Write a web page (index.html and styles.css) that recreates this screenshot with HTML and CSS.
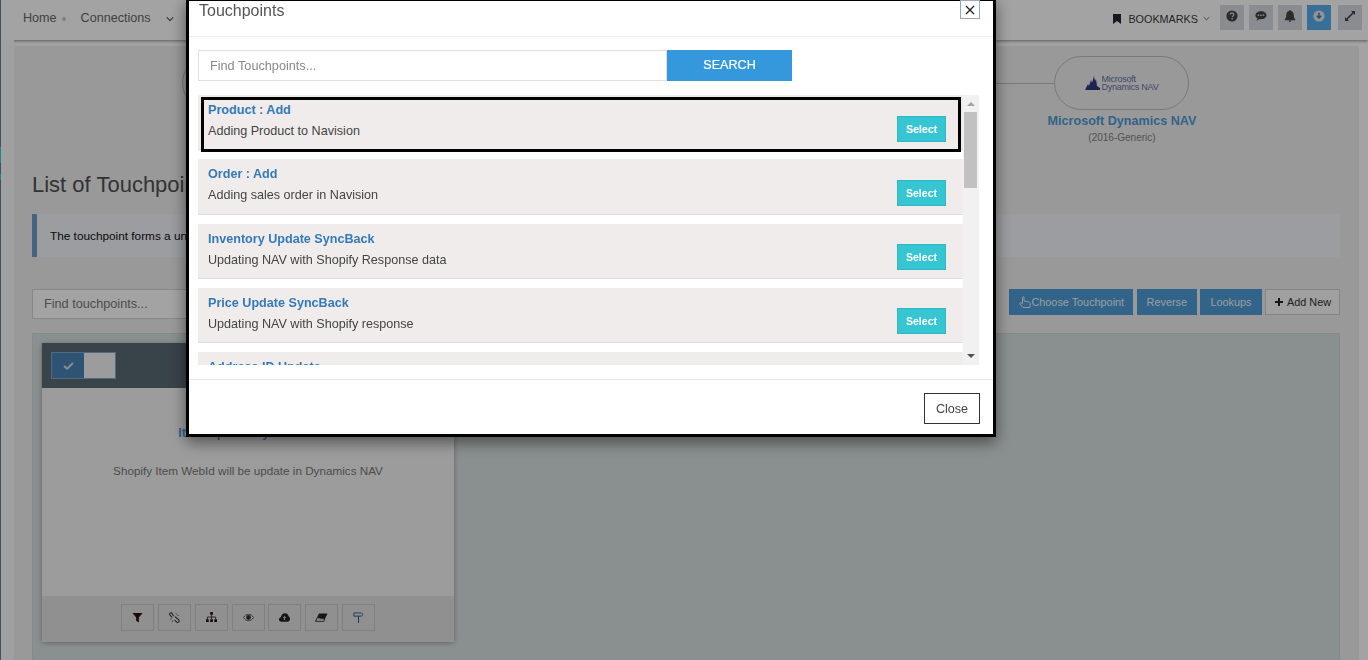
FILE: index.html
```html
<!DOCTYPE html>
<html lang="en">
<head>
<meta charset="utf-8">
<title>Touchpoints</title>
<link rel="stylesheet" href="styles.css">
</head>
<body>
<div class="page">
  <header class="topbar">
    <nav class="crumbs">
      <a class="crumb">Home</a><span class="dot"></span>
      <a class="crumb">Connections</a>
      <svg class="chev" viewBox="0 0 10 6"><path d="M1 1l4 4 4-4" fill="none" stroke="#444" stroke-width="1.3"/></svg>
    </nav>
    <div class="tools">
      <span class="bookmarks">
        <svg class="bm" viewBox="0 0 8 10"><path d="M0 0h8v10L4 7 0 10z" fill="#2a2430"/></svg>
        BOOKMARKS
        <svg class="chev2" viewBox="0 0 10 6"><path d="M1 1l4 4 4-4" fill="none" stroke="#555" stroke-width="1.2"/></svg>
      </span>
      <span class="tool"><svg viewBox="0 0 12 12"><circle cx="6" cy="6" r="5.6" fill="#444"/><path d="M4.2 4.6C4.3 3.6 5 3 6 3s1.9.6 1.9 1.6c0 1.3-1.7 1.3-1.7 2.6" fill="none" stroke="#c8c8c8" stroke-width="1.3"/><rect x="5.4" y="8" width="1.5" height="1.4" fill="#c8c8c8"/></svg></span>
      <span class="tool"><svg viewBox="0 0 14 12"><path d="M7 .5c3.7 0 6.5 2 6.5 4.6S10.7 9.7 7 9.7c-.6 0-1.1 0-1.7-.2C4.3 10.500 3 11.200 1.500 11.400c.8-.8 1.300-1.800 1.400-2.800C1.400 7.800.5 6.500.5 5.100.5 2.500 3.300.5 7 .5z" fill="#444"/><circle cx="4" cy="5.100" r="1" fill="#c8c8c8"/><circle cx="7" cy="5.100" r="1" fill="#c8c8c8"/><circle cx="10" cy="5.100" r="1" fill="#c8c8c8"/></svg></span>
      <span class="tool"><svg viewBox="0 0 12 13"><path d="M6 0c.6 0 1 .4 1 1 2 .4 3 2 3 4 0 3 .6 4 1.700 5.200V11H.3v-.8C1.400 9 2 8 2 5c0-2 1-3.600 3-4 0-.6.400-1 1-1z" fill="#444"/><path d="M4.500 11.500h3C7.500 12.400 6.800 13 6 13s-1.500-.6-1.500-1.500z" fill="#444"/></svg></span>
      <span class="tool tool-on"><svg viewBox="0 0 12 12"><circle cx="6" cy="6" r="5.600" fill="#e8e8e8"/><path d="M6 2.800v5M3.700 5.700L6 8l2.300-2.300" fill="none" stroke="#3c7aa8" stroke-width="1.500"/></svg></span>
      <span class="tool tool-last"><svg viewBox="0 0 12 12"><path d="M7 1h4v4L9.600 3.600 3.600 9.600 5 11H1V7l1.400 1.400 6-6z" fill="#444"/></svg></span>
    </div>
  </header>

  <div class="shell">
    <div class="rail"><i class="mark mark-a"></i><i class="mark mark-b"></i></div>
    <main class="main">
      <div class="flow">
        <div class="pill pill-src"></div>
        <div class="flowline"></div>
        <div class="pill">
          <svg class="navmark" viewBox="0 0 15 14"><path d="M0 14L3 8l1 2 2-6 1 3 2-7 1 5 1-2 1 7 3 2v2z" fill="#2b3a80"/></svg>
          <span class="navtext">Microsoft<br>Dynamics NAV</span>
        </div>
      </div>
      <div class="nodeinfo">
        <div class="nodename">Microsoft Dynamics NAV</div>
        <div class="nodesub">(2016-Generic)</div>
      </div>
      <h1 class="pagetitle">List of Touchpoints</h1>
      <div class="note">The touchpoint forms a unique</div>
      <div class="actions">
        <div class="findbox">Find touchpoints...</div>
        <div class="btns">
          <span class="btn btn-blue btn-choose">
            <svg class="hand" viewBox="0 0 12 13"><path d="M3.500 1.500c0-1 1.500-1 1.500 0V5l5 1c1 .2 1.500 1 1.300 2l-.5 3.500H4L1 8c-.6-.8.400-1.800 1.200-1.200l1.300 1z" fill="none" stroke="#e6eef4" stroke-width="1"/></svg>Choose Touchpoint</span>
          <span class="btn btn-blue">Reverse</span>
          <span class="btn btn-blue btn-lookups">Lookups</span>
          <span class="btn btn-line"><svg class="plus" viewBox="0 0 8 8"><path d="M4 0v8M0 4h8" stroke="#222" stroke-width="2"/></svg> Add New</span>
        </div>
      </div>
      <section class="panel">
        <article class="card">
          <div class="cardhead">
            <div class="toggle">
              <span class="toggle-on"><svg viewBox="0 0 12 9"><path d="M1 4.500l3.500 3L11 1" fill="none" stroke="#d4d8dc" stroke-width="2.400"/></svg></span>
              <span class="toggle-off"></span>
            </div>
          </div>
          <div class="cardbody">
            <h3 class="cardtitle">Item Update Sync Back</h3>
            <p class="carddesc">Shopify Item WebId will be update in Dynamics NAV</p>
          </div>
          <div class="cardfoot">
            <span class="ib"><svg viewBox="0 0 12 12"><path d="M.5 1h11L7.500 6v5.500l-3-2V6z" fill="#2a1010"/></svg></span>
            <span class="ib"><svg viewBox="0 0 12 12"><path d="M5 4.500L3.500 1.800C3 .8 1.800.7 1.200 1.300S.6 2.800 1.300 3.600L3.500 6M6.500 5l3.900 3.400c.9.900.8 1.900.2 2.500s-1.700.6-2.400-.1L6 8.800" fill="none" stroke="#2c2c2c" stroke-width="1.100"/><path d="M7.500 1l.7 2M11 3.500L9 4M1 8l2-.5M3.500 11L4 9" stroke="#8a6a5a" stroke-width=".9" fill="none"/></svg></span>
            <span class="ib"><svg viewBox="0 0 12 12"><path d="M4.500 0h3v3h-3zM0 8h3v3H0zM4.500 8h3v3h-3zM9 8h3v3H9z" fill="#2a1010"/><path d="M6 3v5M1.500 8V5.500h9V8" fill="none" stroke="#333"/></svg></span>
            <span class="ib"><svg viewBox="0 0 12 8"><path d="M.5 4C2 1.500 4 .5 6 .5s4 1 5.500 3.500C10 6.500 8 7.500 6 7.500S2 6.500.5 4z" fill="none" stroke="#555"/><circle cx="6" cy="4" r="2.600" fill="#333"/></svg></span>
            <span class="ib"><svg viewBox="0 0 13 10"><path d="M3 10C1 10 0 8.800 0 7.300 0 6 1 5 2.200 4.800 2.500 2 4.500 0 7 0c2.300 0 4 1.500 4.300 3.500C12.300 4 13 5.200 13 6.700 13 8.600 11.600 10 10 10z" fill="#222"/><path d="M6.500 3L4.300 5.500h1.400V8h1.600V5.500h1.400z" fill="#bbb"/></svg></span>
            <span class="ib ib-wide"><svg viewBox="0 0 13 9"><path d="M4 .5h8.500L9 8H.5z" fill="#222"/><path d="M2.300 4.500L.5 8.500H8.800l1-2.500z" fill="#c8c8c8" stroke="#222" stroke-width=".7"/></svg></span>
            <span class="ib"><svg viewBox="0 0 11 12"><path d="M5.500 4v8" stroke="#2c5a88" stroke-width="1.100"/><path d="M.5 1h8l2 1.800L8.500 4.500H.5z" fill="none" stroke="#2c5a88"/></svg></span>
          </div>
        </article>
      </section>
    </main>
    <div class="gutter"></div>
  </div>
</div>

<div class="overlay">
  <div class="modal">
    <div class="mhead">
      <h4 class="mtitle">Touchpoints</h4>
      <button class="mclose"><svg viewBox="0 0 10 10"><path d="M1 1l8 8M9 1l-8 8" stroke="#222" stroke-width="1.300"/></svg></button>
    </div>
    <div class="mbody">
      <div class="searchrow">
        <div class="search">Find Touchpoints...</div>
        <button class="searchbtn">SEARCH</button>
      </div>
      <div class="listwrap">
        <div class="list">
          <div class="item item-focus">
            <div class="itemtext"><a class="itemtitle">Product : Add</a><p class="itemdesc">Adding Product to Navision</p></div>
            <button class="select">Select</button>
          </div>
          <div class="item">
            <div class="itemtext"><a class="itemtitle">Order : Add</a><p class="itemdesc">Adding sales order in Navision</p></div>
            <button class="select">Select</button>
          </div>
          <div class="item">
            <div class="itemtext"><a class="itemtitle">Inventory Update SyncBack</a><p class="itemdesc">Updating NAV with Shopify Response data</p></div>
            <button class="select">Select</button>
          </div>
          <div class="item">
            <div class="itemtext"><a class="itemtitle">Price Update SyncBack</a><p class="itemdesc">Updating NAV with Shopify response</p></div>
            <button class="select">Select</button>
          </div>
          <div class="item">
            <div class="itemtext"><a class="itemtitle">Address ID Update</a></div>
          </div>
        </div>
        <div class="sbar">
          <i class="arrow arrow-up"></i>
          <i class="thumb"></i>
          <i class="arrow arrow-down"></i>
        </div>
      </div>
    </div>
    <div class="mfoot"><button class="closebtn">Close</button></div>
  </div>
</div>
</body>
</html>
```
FILE: styles.css
```css
* { box-sizing: border-box; }
html, body { margin: 0; height: 660px; overflow: hidden; }
body { font-family: "Liberation Sans", Arial, sans-serif; font-size: 12px; color: #444; background: #fff; }
h1, h3, h4, p { margin: 0; font-weight: normal; }
button { font-family: inherit; cursor: pointer; }

.page { height: 660px; display: flex; flex-direction: column; overflow: hidden; }

.topbar { height: 40px; flex: none; display: flex; align-items: center; justify-content: space-between; background: #fff; border-left: 1px solid #6c7d8e; box-shadow: 0 1px 3px rgba(0,0,0,.45); position: relative; padding: 0 6px 5px 22px; }
.crumbs { display: flex; align-items: center; color: #666; }
.crumb { font-size: 12.6px; }
.dot { width: 4px; height: 4px; border-radius: 50%; background: #c8c8c8; margin: 2px 15px 0 5px; }
.chev { width: 8px; height: 6px; margin: 2px 0 0 15px; }
.tools { display: flex; align-items: center; gap: 5px; }
.bookmarks { display: flex; align-items: center; font-size: 10.8px; color: #3a3a3a; margin: 2px 5px 0 0; }
.bm { width: 8px; height: 10px; margin-right: 7px; }
.chev2 { width: 7px; height: 5px; margin-left: 5px; }
.tool { width: 24px; height: 25px; background: #d6dce2; display: flex; align-items: center; justify-content: center; }
.tool svg { width: 12px; height: 12px; margin-bottom: 4px; }
.tool-on { background: #58aef0; }
.tool-last { margin-left: 2px; }

.shell { flex: 1; display: flex; padding-top: 6px; min-height: 0; background: #fff; }
.rail { width: 14px; flex: none; position: relative; background: linear-gradient(90deg, #6c7d8e 1px, #fafafa 1px); margin-top: -6px; }
.mark { position: absolute; left: 0; width: 1px; background: #2fd0c8; }
.mark-a { top: 107px; height: 16px; }
.mark-b { top: 134px; height: 6px; }
.main { flex: 1; min-width: 0; background: #f0f0f0; padding: 10px 19px 0 18px; overflow: hidden; }
.gutter { width: 9px; flex: none; }

.flow { display: flex; align-items: center; height: 54px; padding: 0 151px 0 150px; }
.pill { width: 135px; height: 54px; flex: none; border: 1px solid #bdbdbd; border-radius: 27px; display: flex; align-items: center; justify-content: center; }
.flowline { flex: 1; height: 1px; background: #bdbdbd; }
.navmark { width: 15px; height: 14px; margin-right: 2px; }
.navtext { font-size: 9px; line-height: 8px; letter-spacing: -.25px; color: #6470a8; }
.nodeinfo { width: 180px; margin-left: auto; margin-right: 128px; text-align: center; padding-top: 3px; }
.nodename { font-size: 12.6px; font-weight: bold; line-height: 16px; color: #4f9bd6; white-space: nowrap; }
.nodesub { font-size: 10px; line-height: 12px; margin-top: 3px; color: #808080; }
.pagetitle { font-size: 22px; line-height: 26px; color: #505050; margin-top: 28px; }
.note { height: 43px; margin-top: 16px; background: #f4f6fb; border-left: 5px solid #6f9ccb; padding-left: 13px; display: flex; align-items: center; font-size: 11.8px; color: #111; }

.actions { display: flex; justify-content: space-between; align-items: flex-start; margin-top: 32px; height: 44px; }
.findbox { width: 300px; height: 30px; border: 1px solid #d4d4d4; background: #fff; padding: 0 11px; display: flex; align-items: center; color: #777; font-size: 12.7px; }
.btns { display: flex; gap: 3px; }
.btn { height: 26px; display: flex; align-items: center; font-size: 10.85px; padding: 0 10px; white-space: nowrap; }
.btn-blue { background: #4f9bd6; color: #f0f5f8; }
.btn.btn-choose { padding: 0 8.5px 0 10px; margin-right: 1px; }
.btn.btn-lookups { padding: 0 10.5px; }
.hand { width: 12px; height: 13px; }
.btn.btn-line { background: #fafafa; border: 1px solid #cfcfcf; color: #333; padding: 0 8px 0 9px; }
.plus { width: 8px; height: 8px; margin-right: 4px; }

.panel { height: 340px; background: #d8e1e0; border: 1px solid #cfd9d8; padding: 9px; }
.card { width: 412px; height: 299px; background: #f5f5f5; box-shadow: 0 1px 5px rgba(0,0,0,.3); display: flex; flex-direction: column; }
.cardhead { height: 45px; flex: none; background: #5a6974; padding: 9px; }
.toggle { width: 65px; height: 27px; border: 1px solid #7ea6cc; display: flex; }
.toggle-on { width: 32px; background: #4a82b4; display: flex; align-items: center; justify-content: center; }
.toggle-on svg { width: 11px; height: 8px; }
.toggle-off { flex: 1; background: #f5f5f5; }
.cardbody { flex: 1; text-align: center; padding-top: 37px; }
.cardtitle { font-size: 12.6px; font-weight: bold; line-height: 16px; color: #4f9bd6; }
.carddesc { font-size: 11.7px; line-height: 16px; margin-top: 22px; color: #777; }
.cardfoot { height: 46px; flex: none; background: #e2e2e2; display: flex; justify-content: center; gap: 3.83px; padding-top: 8px; }
.ib { width: 33px; height: 27px; border: 1px solid #c8c8c8; display: flex; align-items: center; justify-content: center; }
.ib svg { width: 11px; height: 11px; }
.ib-wide svg { width: 13px; }

.overlay { position: fixed; inset: 0; background: rgba(0,0,0,.36); }
.modal { position: absolute; left: 186px; top: -2px; width: 810px; height: 439px; background: #fff; border: 3px solid #000; box-shadow: 0 5px 15px rgba(0,0,0,.5); display: flex; flex-direction: column; }

.mhead { height: 36px; flex: none; border-bottom: 1px solid #eee; display: flex; justify-content: space-between; padding: 0 13px 0 10px; }
.mtitle { font-size: 16px; line-height: 20px; color: #555; }
.mclose { width: 20px; height: 19px; margin: -1px 0 0; padding: 0; border: 1px solid #9aa7b2; background: #fff; display: flex; align-items: center; justify-content: center; }
.mclose svg { width: 10px; height: 10px; }

.mbody { flex: 1; padding: 13px 14px 14px 9px; min-height: 0; }
.searchrow { display: flex; height: 31px; }
.search { width: 469px; border: 1px solid #e0e0e0; padding: 0 11px; display: flex; align-items: center; font-size: 12.7px; color: #888; }
.searchbtn { width: 125px; border: 0; background: #3598dc; color: #fff; font-size: 12.6px; padding: 0 0 1px; -webkit-text-stroke: .2px #fff; }

.listwrap { display: flex; height: 270px; margin-top: 14px; }
.list { width: 765px; overflow: hidden; background: #fff; }
.item { position: relative; height: 55.33px; margin-bottom: 9px; background: #f0ecec; border-bottom: 1px solid #ddd; display: flex; justify-content: space-between; padding: 7px 17px 0 10px; }
.item-focus::after { content: ""; position: absolute; top: 2px; left: 3px; right: 2px; bottom: -3px; border: 3px solid #000; }
.itemtitle { display: block; font-size: 12.6px; font-weight: bold; line-height: 16px; color: #337ab7; }
.itemdesc { font-size: 12.6px; line-height: 16px; margin-top: 5px; color: #444; }
.select { width: 49px; height: 26px; margin-top: 13.5px; border: 1px solid #2bb8c4; background: #36c6d3; color: #fff; font-size: 10.5px; font-weight: bold; padding: 0; }

.sbar { width: 16px; background: #f1f1f1; display: flex; flex-direction: column; align-items: center; }
.thumb { width: 13px; height: 76px; margin: 6px 1px 0 0; background: #c1c1c1; }
.arrow { width: 0; height: 0; border-left: 4px solid transparent; border-right: 4px solid transparent; }
.arrow-up { border-bottom: 4px solid #a3a3a3; margin-top: 7px; }
.arrow-down { border-top: 4px solid #505050; margin-top: auto; margin-bottom: 7px; }

.mfoot { height: 55px; flex: none; border-top: 1px solid #e5e5e5; display: flex; justify-content: flex-end; align-items: flex-start; padding: 13px 13px 0 0; }
.closebtn { width: 56px; height: 31px; border: 1px solid #333; background: #fff; color: #444; font-size: 12.6px; padding: 0; }
```
